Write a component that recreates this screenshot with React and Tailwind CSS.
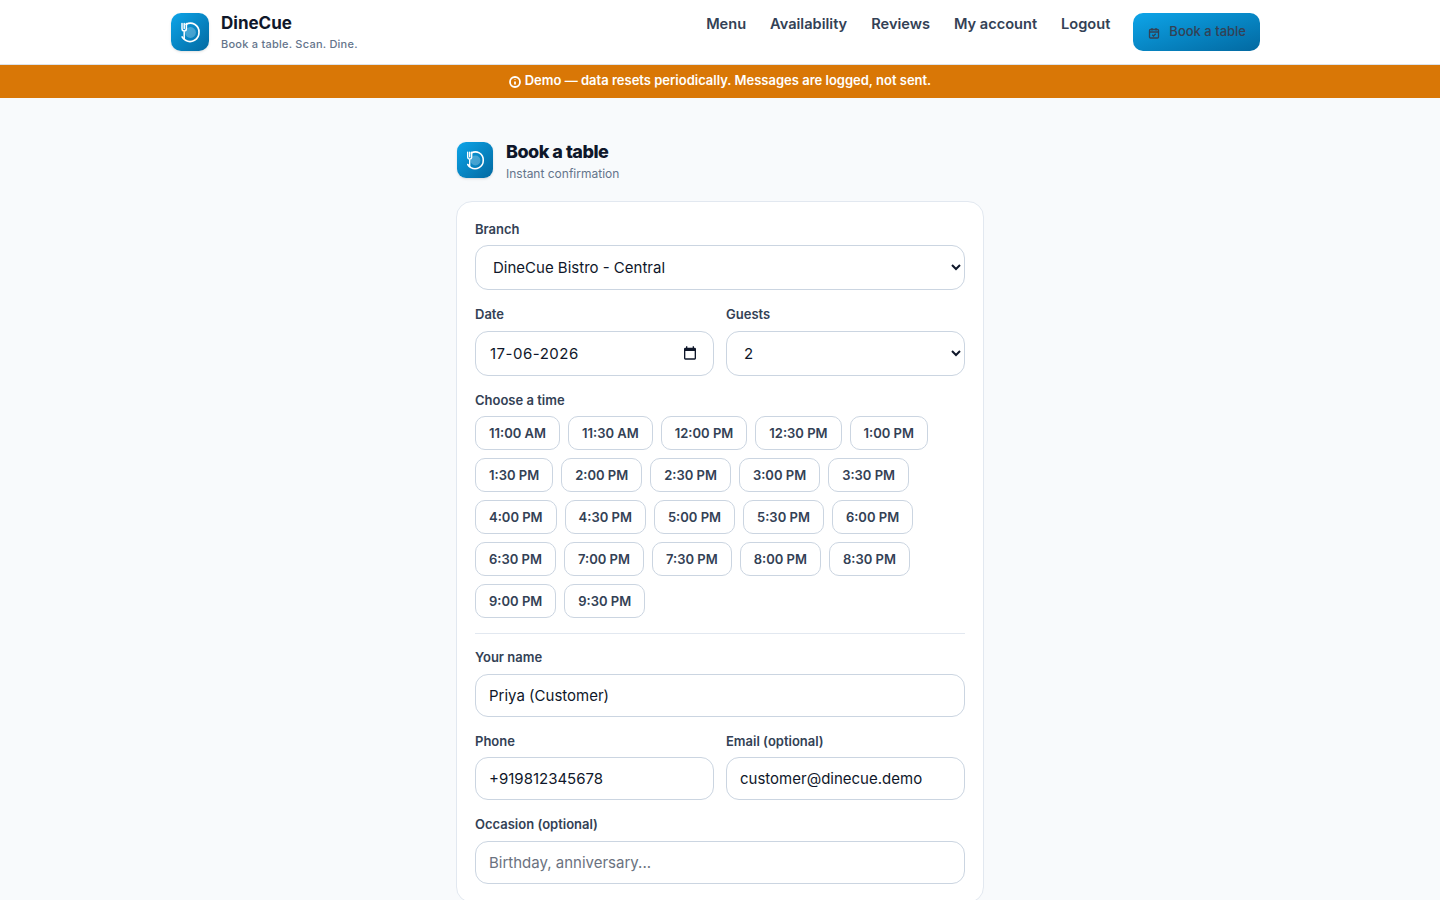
const times = [
  ["11:00 AM", "11:30 AM", "12:00 PM", "12:30 PM", "1:00 PM"],
  ["1:30 PM", "2:00 PM", "2:30 PM", "3:00 PM", "3:30 PM"],
  ["4:00 PM", "4:30 PM", "5:00 PM", "5:30 PM", "6:00 PM"],
  ["6:30 PM", "7:00 PM", "7:30 PM", "8:00 PM", "8:30 PM"],
  ["9:00 PM", "9:30 PM"],
];

const navLinks = ["Menu", "Availability", "Reviews", "My account", "Logout"];

const fieldClass =
  "block w-full h-[43px] px-[13px] rounded-[13px] border border-[#cbd5e1] bg-white text-[15px] text-[#0f172a] placeholder:text-[#6b7280] outline-none";
const selectClass =
  "block w-full h-[45px] px-[13px] rounded-[13px] border border-[#cbd5e1] bg-white text-[15px] text-[#0f172a] outline-none";
const labelClass = "block text-[13px] leading-[16px] font-semibold text-[#334155]";

// plate and fork mark used in the header and above the form
const LogoMark = ({ box, icon }) => (
  <div className={`${box} shrink-0 flex items-center justify-center bg-gradient-to-br from-[#0ea5e9] to-[#0369a1] shadow-sm`}>
    <svg viewBox="0 0 24 24" className={icon} fill="none" stroke="#fff" strokeLinecap="round">
      <circle cx="12.5" cy="12.5" r="5.4" fill="#ffffff" fillOpacity="0.25" stroke="none" />
      <path d="M8 4.4a9 9 0 0 1 8.6-.2A9 9 0 0 1 21 12.5a9 9 0 0 1-4.5 7.8 9 9 0 0 1-9 0 9 9 0 0 1-3.4-3.4" strokeWidth="1.7" />
      <path d="M4 3.5v5M6.2 3.5v5M8.4 3.5v5M4 8.5c0 1.7 1 2.5 2.2 2.5s2.2-.8 2.2-2.5M6.2 11v8" strokeWidth="1.5" />
    </svg>
  </div>
);

export default function App() {
  return (
    <div className="min-h-screen bg-[#f8fafc] font-['Inter',sans-serif] text-[#0f172a]">
      <header className="h-[65px] bg-white border-b border-[#dbe2ea]">
        <div className="flex items-start justify-between ml-[171px] mr-[180px] pt-[13px]">
          <div className="flex items-start gap-3">
            <LogoMark box="w-[38px] h-[38px] rounded-[10px]" icon="w-[24px] h-[24px]" />
            <div>
              <div className="text-[17px] leading-[21px] font-bold text-[#0f172a]">DineCue</div>
              <div className="mt-[3px] text-[11px] leading-[14px] font-medium tracking-[0.24px] text-[#64748b]">
                Book a table. Scan. Dine.
              </div>
            </div>
          </div>
          <nav className="flex items-start gap-6">
            {navLinks.map((link) => (
              <a key={link} className="mt-[2px] text-[14.6px] leading-[18px] font-semibold text-[#334155]">
                {link}
              </a>
            ))}
            <button className="flex items-center gap-[9px] h-[38px] pl-[15px] pr-[14px] -ml-[1px] pb-[1px] rounded-[10px] bg-gradient-to-br from-[#0ea5e9] to-[#0369a1] text-[13px] font-medium text-[#334155]">
              <svg viewBox="0 0 24 24" className="w-[12px] h-[12px] mt-[2px]" fill="none" stroke="currentColor" strokeWidth="2.6">
                <rect x="3" y="5" width="18" height="17" rx="2" />
                <path d="M3 10h18M8 2v5M16 2v5M8.5 15.5l2.5 2.5 4.5-4.5" />
              </svg>
              Book a table
            </button>
          </nav>
        </div>
      </header>

      <div className="flex items-center justify-center gap-[4px] h-[33px] pb-[1px] bg-[#d97706] text-[13px] font-semibold text-white">
        <svg viewBox="0 0 24 24" className="w-[12px] h-[12px] mt-[1px]" fill="none" stroke="currentColor" strokeWidth="3.6">
          <circle cx="12" cy="12" r="10" />
          <path d="M12 11v6M12 6.5v1" />
        </svg>
        <span>Demo — data resets periodically. Messages are logged, not sent.</span>
      </div>

      <main className="w-[528px] mx-auto pt-[44px] pb-10">
        <div className="flex items-start gap-[13px] pl-px">
          <LogoMark box="w-[36px] h-[36px] rounded-[9px]" icon="w-[22px] h-[22px]" />
          <div>
            <h1 className="text-[18px] leading-[20px] font-extrabold tracking-[-0.5px] text-[#0f172a]">Book a table</h1>
            <p className="mt-[4px] text-[12px] leading-[16px] text-[#64748b]">Instant confirmation</p>
          </div>
        </div>

        <form className="mt-[19px] px-[18px] pt-[19px] pb-[18px] bg-white border border-[#e2e8f0] rounded-[16px]">
          <label className={`${labelClass} mb-[8px]`}>Branch</label>
          <select className={selectClass} defaultValue="central">
            <option value="central">DineCue Bistro - Central</option>
          </select>

          <div className="grid grid-cols-2 gap-3 mt-[16px]">
            <div>
              <label className={`${labelClass} mb-[9px]`}>Date</label>
              <div className="relative">
                <input className={`${selectClass} tracking-[0.5px] pl-[14px]`} defaultValue="17-06-2026" />
                <svg viewBox="0 0 24 24" className="absolute right-[16px] top-[14px] w-[16px] h-[16px]" fill="#0f172a">
                  <path d="M19 4h-1V2h-2v2H8V2H6v2H5a2 2 0 0 0-2 2v14a2 2 0 0 0 2 2h14a2 2 0 0 0 2-2V6a2 2 0 0 0-2-2zm0 16H5V9h14v11z" />
                </svg>
              </div>
            </div>
            <div>
              <label className={`${labelClass} mb-[9px]`}>Guests</label>
              <select className={selectClass} defaultValue="2">
                <option value="2">2</option>
              </select>
            </div>
          </div>

          <label className={`${labelClass} mt-[16px] mb-[8px]`}>Choose a time</label>
          <div className="flex flex-col gap-2">
            {times.map((row) => (
              <div key={row[0]} className="flex gap-2">
                {row.map((time) => (
                  <button
                    key={time}
                    type="button"
                    className="h-[34px] pt-[1px] px-[13px] rounded-[10px] border border-[#cbd5e1] bg-white text-[13px] font-semibold text-[#334155]"
                  >
                    {time}
                  </button>
                ))}
              </div>
            ))}
          </div>

          <hr className="mt-[15px] mb-[15px] border-[#e2e8f0]" />

          <label className={`${labelClass} mb-[9px]`}>Your name</label>
          <input className={fieldClass} defaultValue="Priya (Customer)" />

          <div className="grid grid-cols-2 gap-3 mt-[16px]">
            <div>
              <label className={`${labelClass} mb-[8px]`}>Phone</label>
              <input className={fieldClass} defaultValue="+919812345678" />
            </div>
            <div>
              <label className={`${labelClass} mb-[8px]`}>Email (optional)</label>
              <input className={fieldClass} defaultValue="customer@dinecue.demo" />
            </div>
          </div>

          <label className={`${labelClass} mt-[16px] mb-[9px]`}>Occasion (optional)</label>
          <input className={fieldClass} placeholder="Birthday, anniversary..." />
        </form>
      </main>
    </div>
  );
}
